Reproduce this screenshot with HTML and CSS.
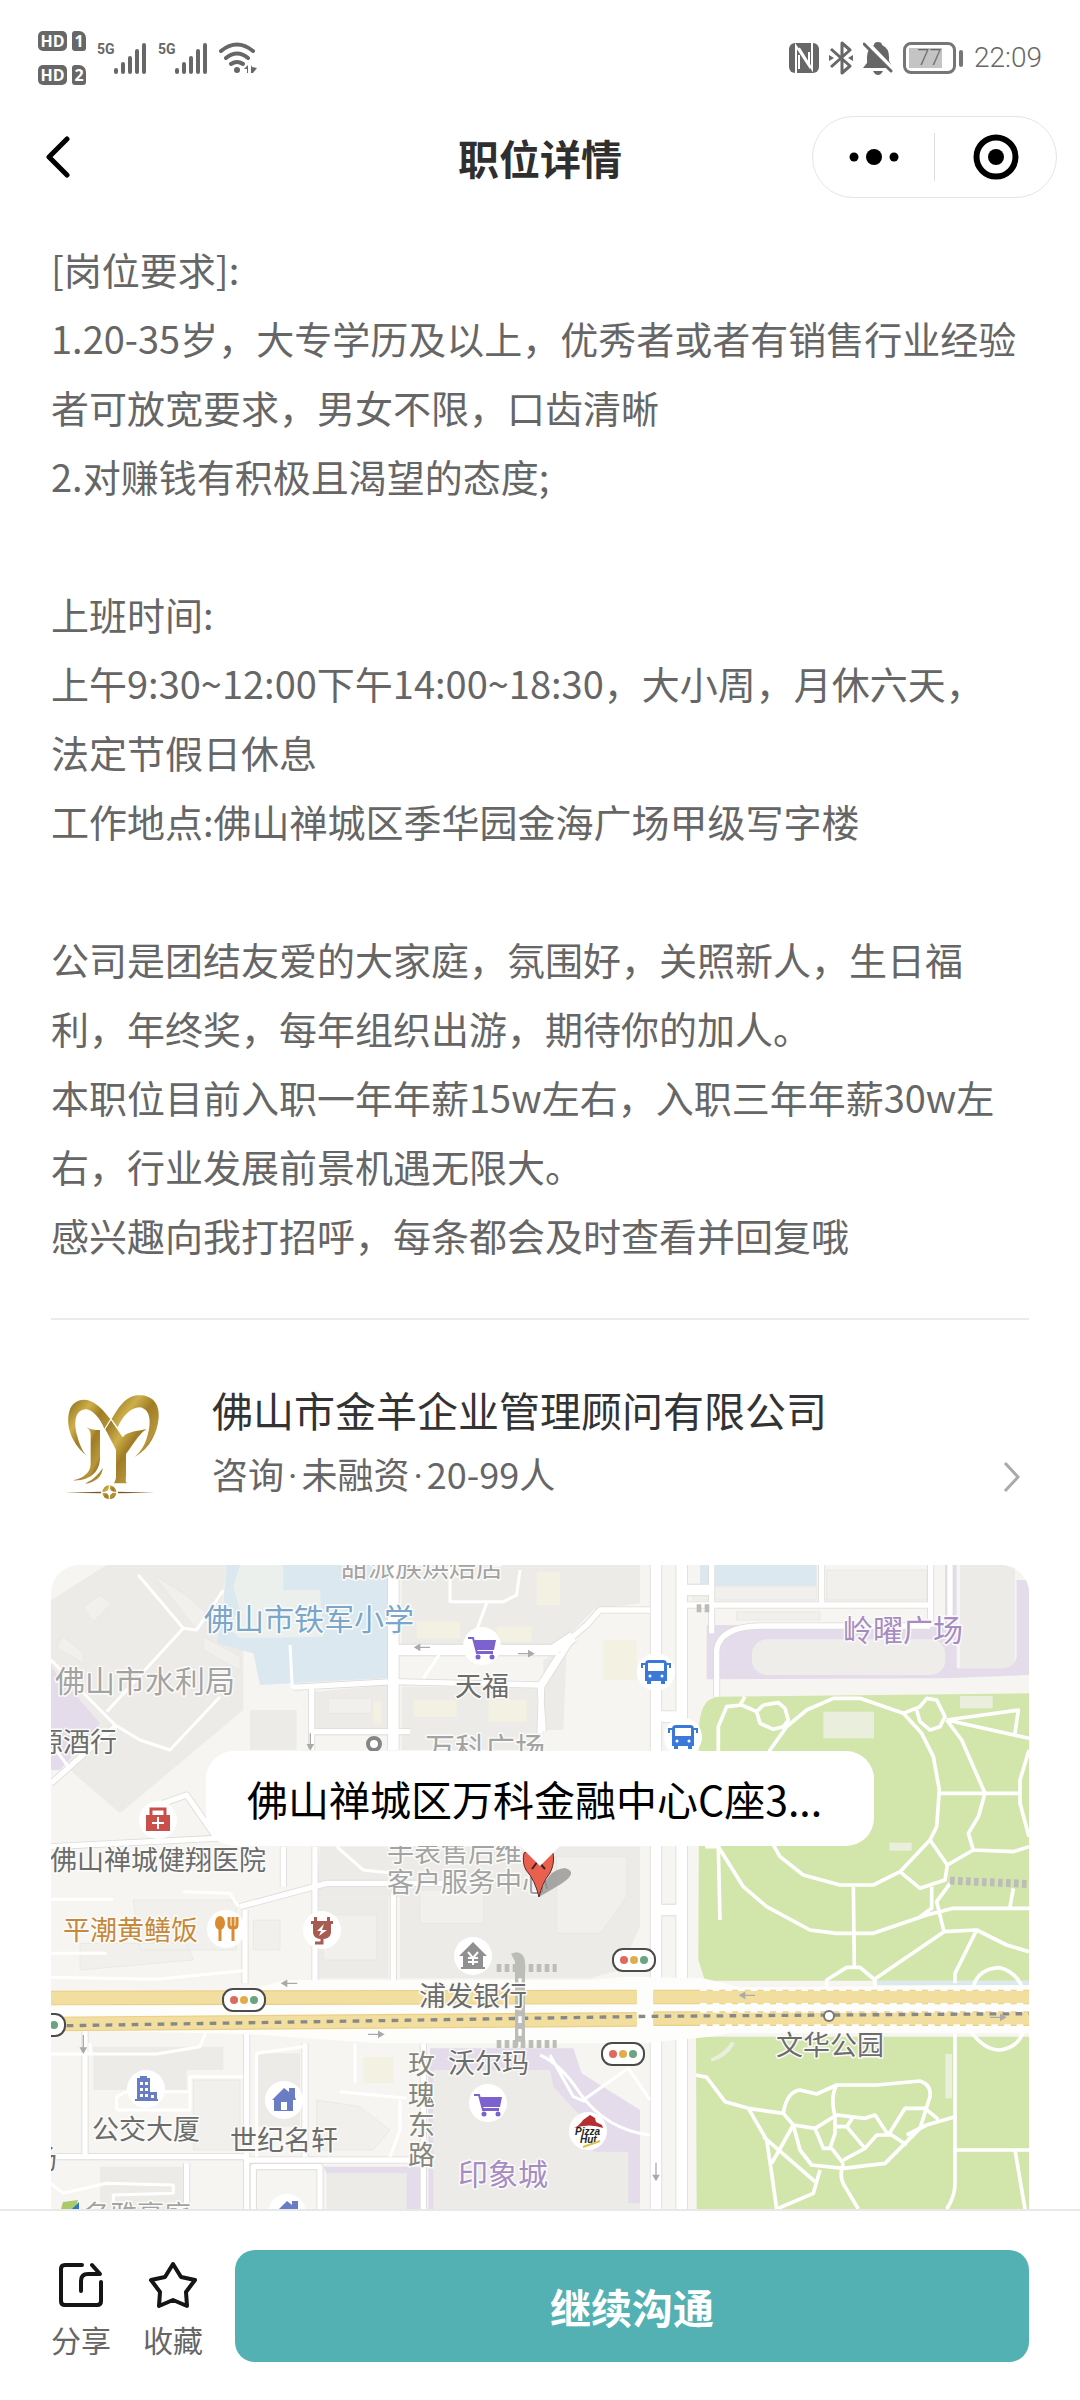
FILE: index.html
```html
<!DOCTYPE html>
<html lang="zh-CN">

<head>
    <meta charset="UTF-8">
    <meta name="viewport" content="width=device-width, initial-scale=1.0">
    <link rel="stylesheet" href="styles.css">

    <title>职位详情</title>
</head>

<body>
<div class="page">
    <!-- 状态栏 -->
    <div class="status">
        <div class="status-left">
            <div class="sims">
                <div class="sim"><span class="hd">HD</span><span class="card">1</span></div>
                <div class="sim"><span class="hd">HD</span><span class="card">2</span></div>
            </div>
            <div class="signal">
                <span>5G</span>
                <svg width="33" height="32" viewBox="0 0 33 32">
                    <path d="M2 28v2M9 22v8M16 16v14M23 9v21M30 3v27"/>
                </svg>
            </div>
            <div class="signal">
                <span>5G</span>
                <svg width="33" height="32" viewBox="0 0 33 32">
                    <path d="M2 28v2M9 22v8M16 16v14M23 9v21M30 3v27"/>
                </svg>
            </div>
            <svg class="wifi" width="38" height="32" viewBox="0 0 38 32">
                <path d="M2 9Q18-4 34 9M7 16Q18 7 29 16M12 22Q18 18 24 22"/>
                <circle cx="18" cy="28" r="3"/>
                <path class="solid" d="M29 23v8h-1v-4h-3zM32 31v-8l1 2 5 1-4 5z"/>
            </svg>
        </div>
        <div class="status-right">
            <svg width="30" height="32" viewBox="0 0 30 32">
                <rect x="0" y="1" width="30" height="30" rx="6" fill="#676767"/>
                <path d="M7 31V4l13 20V10M10 13v14M23 1v26L10 6" fill="none" stroke="#fff" stroke-width="2"/>
            </svg>
            <svg width="24" height="34" viewBox="0 0 24 34">
                <path d="M2 8l19 17-8 7V2l8 7L2 26" fill="none" stroke="#676767" stroke-width="3" stroke-linejoin="round"/>
                <path d="M0 14l5 3-5 3zM24 14l-5 3 5 3z" fill="#676767"/>
            </svg>
            <svg width="30" height="34" viewBox="0 0 30 34">
                <path d="M11 4q0-3 4-3t4 3q7 3 7 12v4l4 7H0l4-5v-6q0-8 7-12zM10 30h10q-2 4-5 4t-5-4z" fill="#676767"/>
                <path d="M3 1l27 28" stroke="#fff" stroke-width="5"/>
                <path d="M1 3l27 27" stroke="#676767" stroke-width="3" stroke-linecap="round"/>
            </svg>
            <div class="battery"><span>77</span></div>
            <span class="clock">22:09</span>
        </div>
    </div>

    <!-- 标题栏 -->
    <header class="nav">
        <button class="back" aria-label="返回">
            <svg width="26" height="42" viewBox="0 0 26 42"><path d="M22 3L4 21l18 18"/></svg>
        </button>
        <h1>职位详情</h1>
        <div class="capsule">
            <button aria-label="更多">
                <svg width="50" height="20" viewBox="0 0 50 20">
                    <circle cx="5" cy="10" r="4.5"/><circle cx="25" cy="10" r="8"/><circle cx="45" cy="10" r="4.5"/>
                </svg>
            </button>
            <button aria-label="关闭">
                <svg width="46" height="46" viewBox="0 0 46 46">
                    <circle cx="23" cy="23" r="19.5" fill="none" stroke="#000" stroke-width="6"/><circle cx="23" cy="23" r="8"/>
                </svg>
            </button>
        </div>
    </header>

    <main>
        <section class="desc">
            <p>[岗位要求]:</p>
            <p>1.20-35岁，大专学历及以上，优秀者或者有销售行业经验者可放宽要求，男女不限，口齿清晰</p>
            <p>2.对赚钱有积极且渴望的态度;</p>
            <br>
            <p>上班时间:</p>
            <p>上午9:30~12:00下午14:00~18:30，大小周，月休六天，<br>法定节假日休息</p>
            <p>工作地点:佛山禅城区季华园金海广场甲级写字楼</p>
            <br>
            <p>公司是团结友爱的大家庭，氛围好，关照新人，生日福利，年终奖，每年组织出游，期待你的加人。</p>
            <p>本职位目前入职一年年薪15w左右，入职三年年薪30w左右，行业发展前景机遇无限大。</p>
            <p>感兴趣向我打招呼，每条都会及时查看并回复哦</p>
        </section>

        <a class="company" href="#">
            <svg class="logo" width="128" height="130" viewBox="33 30 384 390">
                <defs>
                    <linearGradient id="gold" x1="0" y1="0" x2="1" y2="1">
                        <stop offset="0" stop-color="#8a6a1c"/>
                        <stop offset=".3" stop-color="#cdb04a"/>
                        <stop offset=".5" stop-color="#a07c26"/>
                        <stop offset=".75" stop-color="#b8973a"/>
                        <stop offset="1" stop-color="#5f3d12"/>
                    </linearGradient>
                </defs>
                <g fill="url(#gold)">
                    <path d="M138 262C100 230 75 180 88 130 98 92 140 85 170 110 190 125 200 140 211 153L193 182C180 150 160 128 140 124 105 122 100 165 112 205 118 230 128 248 138 262Z"/>
                    <path d="M285 267C330 240 352 195 356 150 360 100 330 78 290 82 250 88 230 130 215 153L233 178C245 150 270 118 300 118 335 125 333 170 322 205 314 235 300 252 285 267Z"/>
                    <path d="M138 176C150 185 165 186 180 186V270C180 310 150 340 98 337 130 330 150 315 152 290V200C152 188 145 182 138 176Z"/>
                    <path d="M188 300C188 325 165 345 135 347 160 335 175 320 188 300Z"/>
                    <path d="M196 184L213 157 248 208C262 190 290 190 320 183 300 195 290 215 258 258V320C258 335 255 342 262 346H222C228 335 228 330 228 315V245Z"/>
                    <circle cx="208" cy="373" r="21"/>
                </g>
                <path d="M75 374L183 371V376ZM345 374L234 371V376Z" fill="#7a5a1c"/>
                <path d="M208 350V396M185 373H231" stroke="#fff" stroke-width="3"/>
                <path d="M208 357Q211 370 224 373 211 376 208 389 205 376 192 373 205 370 208 357Z" fill="#fff"/>
            </svg>
            <span class="company-text">
                <strong>佛山市金羊企业管理顾问有限公司</strong>
                <span>咨询<i>·</i>未融资<i>·</i>20-99人</span>
            </span>
            <svg class="arrow" width="20" height="32" viewBox="0 0 20 32"><path d="M3 2l13 14L3 30"/></svg>
        </a>

        <div class="map">
            <!-- 底图 -->
            <svg class="map-base" viewBox="33 45 2934 1932" preserveAspectRatio="xMidYMin slice">
                <defs>
                    <g id="minor">
                        <path d="M295 75L430 235 470 240 550 120M430 235L200 485M33 330L225 525 300 570 390 600 540 440M40 590L85 650M750 285L757 415M1200 310L1150 385M1230 45V155H1390L1430 135 1440 60M1340 160L1310 240M890 890L970 960 1060 970"/>
                        <path d="M33 1048H220M33 1210H200M430 1025L570 1030 595 1070M33 1282L350 1288 610 1262M33 1512H350L480 1490 500 1440M150 1512V1480M230 1680V1640L260 1625H450M230 1680H450V1580H610M650 1820V1510L790 1490M945 1480V1600M900 1625L1100 1645M1080 1650V1740L1050 1820M33 1900L70 1930 200 1900 400 1905V1930L220 1935V1977"/>
                        <path d="M1530 1515L1600 1640 1635 1655M1500 1515Q1560 1540 1620 1630 1700 1740 1830 1755M1630 1650L1765 1555 1830 1650"/>
                    </g>
                    <g id="mid">
                        <path d="M33 700L230 525M33 890L530 865 440 735 370 760M760 412L1060 395 1500 405M815 415V600M815 545H1110M1560 310L1500 405 1510 545M730 890V1010M825 890V1300M600 1070L860 1000 1300 1000M615 1080V1300M1060 1030V1300M135 1440V1820M33 1820H620M620 1830H1160M620 1440V1977M795 1480V1820M1150 1480V1977M440 1840V1977M640 1977V1850H840V1977M1930 165H2680M2015 45V250M2345 45V165M2672 45V230M2730 45V240M2030 440V300Q2040 230 2160 228H2670M1575 280L1640 225 1680 180H1830M1500 550L1505 410 1600 260"/>
                    </g>
                    <g id="main">
                        <path d="M1060 45V600M1060 300H1540L1600 260M1848 45V1977M1925 45V1977M1848 1080H1930M1850 500H1925M1940 120H2010"/>
                    </g>
                </defs>

                <rect x="33" y="45" width="2934" height="1932" fill="#f6f5f1"/>

                <!-- 街区 -->
                <g fill="#ecebe8">
                    <path d="M33 150L200 45H560L530 280 610 300V480L240 790 90 660 33 600Z"/>
                    <path d="M1085 45H1800V160L1660 180 1560 285H1085ZM825 425L1045 405V535H825ZM1085 410H1490L1500 600H1085ZM1510 330L1580 290 1570 540 1510 540ZM840 890H1800V1130L1740 1260 1650 1285H1080V1040L830 1040Z"/>
                    <path d="M835 1040H1045V1285H835ZM630 480H770V600H630ZM160 1490H550V1560H160ZM160 1560H440V1620H160ZM1180 1540H1540L1800 1760V1977H1180ZM860 1870H1100V1977H860ZM180 1850H430V1977H180ZM650 1510H780V1730H650Z"/>
                    <path d="M2760 45H2925V320Q2925 355 2890 355H2760Z"/>
                </g>
                <g fill="#f1f0ec" stroke="#e6e5e1" stroke-width="2">
                    <path d="M340 75L430 130 500 190 470 240 400 150ZM130 170L180 135 215 160 160 215ZM70 260L130 310V340L50 290ZM490 260L600 320V360L490 300Z"/>
                    <path d="M865 445H995V490H865ZM850 1095H1010V1230H850ZM1140 1020H1330V1120H1140ZM1550 920H1760V1040L1680 1150H1550ZM460 1590H600V1800H460ZM830 1650L960 1670 1050 1740 1000 1800H830ZM1960 110H2330V150H1960ZM2360 60H2660V150H2360ZM2090 185H2340V210H2090Z"/>
                    <path d="M120 1260V1180H440L460 1230ZM280 1050H590V1200H300ZM640 1110H720V1200H640Z"/>
                </g>
                <g fill="#f3f1e2">
                    <path d="M1130 215H1260V265H1130ZM1370 230H1475V275H1370ZM1120 450H1250V500H1120ZM1345 450H1460V515H1345ZM1490 65H1560V165H1490ZM1000 455H1025V520H1000ZM1690 270H1790V390H1690ZM970 1520H1060V1600H970Z"/>
                </g>

                <!-- 学校、水面 -->
                <g fill="#dce8ef">
                    <path d="M560 45H1045V385L830 395 660 405 640 310 530 280 550 150Z"/>
                    <path d="M1980 45H2330V108H1980ZM2500 1292H2967V1305H2500Z"/>
                </g>
                <path d="M600 45H730V120H840L850 260 600 265 560 230 600 180 580 110Z" fill="#ebf0ed"/>

                <!-- 商场 -->
                <g fill="#e4dcea">
                    <path d="M33 350L180 520 60 660 33 660Z"/>
                    <path d="M2000 225H2715V45H2750V355H2890Q2925 350 2930 320V90H2967V375L2715 385 2000 388Z"/>
                    <path d="M1170 1495H1600L1625 1570 1800 1680V1960H1765V1805H1660V1740L1540 1610 1530 1560H1170ZM850 1850H1160V1977H1100V1870H860ZM1165 1540H1180V1977H1165Z"/>
                </g>
                <rect x="2136" y="268" width="580" height="107" rx="45" fill="#eeedea"/>

                <!-- 公园 -->
                <g fill="#d2e6ab">
                    <path d="M1978 520Q1985 440 2040 440L2967 430V1292H1995L1975 1230Z"/>
                    <path d="M1968 1460H2967V1977H1970Z"/>
                </g>
                <g fill="#e9eedd">
                    <path d="M2350 485H2502V565H2350ZM2548 878H2615V902H2548ZM2760 438H2858V475H2760ZM2716 1512H2736V1645H2716ZM2012 1525Q2050 1510 2075 1475L2085 1480Q2060 1525 2015 1535Z"/>
                </g>

                <!-- 道路 -->
                <g fill="none" stroke-linejoin="round">
                    <g stroke="#dddcd9">
                        <use href="#mid" stroke-width="21"/>
                        <use href="#main" stroke-width="37"/>
                    </g>
                    <g stroke="#fff">
                        <use href="#minor" stroke-width="9"/>
                        <use href="#mid" stroke-width="16"/>
                        <use href="#main" stroke-width="32"/>
                    </g>
                </g>

                <!-- 公园小路 -->
                <g class="trail">
                    <path d="M2040 1110L2035 895V530L2060 470 2105 465 2150 485M2115 440L2100 465M2170 465L2215 458 2235 475 2245 510 2230 530 2200 538 2160 520 2150 485 2170 465M2240 530L2300 480 2380 445H2460L2590 490 2645 550 2680 620 2698 720 2690 830 2670 870 2580 965 2500 1005H2400L2290 975 2220 920 2180 850 2170 700 2190 600 2240 530"/>
                    <path d="M2590 490L2640 470 2660 445 2690 450 2715 500 2700 530 2670 540 2640 515 2630 480M2720 510L2935 480 2925 550M2720 510L2967 565M2720 510L2765 570 2835 730 2815 800 2785 850 2800 900 2920 905 2967 890M2700 730H2940M2967 600L2940 690V760L2967 860M2670 870L2722 945 2800 900M2722 945L2715 990 2640 1015 2580 965"/>
                    <path d="M1995 890H2035L2110 1010 2180 1070 2310 1140 2390 1150H2500L2660 1095 2740 1075H2967M2440 1010L2443 1250M2675 1010V1075L2640 1100M2730 1000L2690 1055 2712 1145M2712 1145L2500 1290M2712 1145L2810 1140 2900 1185 2967 1205M2810 1140L2745 1270V1300M2910 1070L2920 1015M2360 1310V1290L2420 1252H2460L2505 1290V1320M2800 1310Q2815 1255 2880 1253 2930 1265 2950 1320M2790 1440Q2830 1500 2880 1500 2940 1490 2950 1440"/>
                    <path d="M1968 1575L2000 1582 2055 1655 2125 1675 2230 1690 2260 1725 2325 1735 2390 1695 2475 1705 2505 1695 2545 1755 2595 1675H2655L2695 1708M2230 1690Q2240 1625 2280 1620L2330 1632 2390 1605H2510L2640 1593Q2675 1605 2670 1640L2640 1735 2535 1840 2410 1855 2315 1845 2280 1800 2260 1725 2195 1840M2125 1675L2180 1770 2195 1870 2210 1977 2320 1930 2340 1860M2170 1760L2325 1895M2390 1605Q2370 1640 2385 1700V1750L2370 1795H2350L2325 1735M2385 1730H2420L2440 1700M2420 1730L2475 1795M2375 1795L2410 1840M2410 1830L2475 1795 2510 1755H2555L2600 1785M2600 1755L2660 1725 2745 1700M2410 1840Q2395 1880 2415 1910L2455 1977M2745 1450V1900Q2745 1940 2720 1977M2750 1800H2967M2925 1800L2955 1977"/>
                </g>

                <!-- 主干道 -->
                <path d="M33 1325H600L740 1290H1640L1770 1280 1990 1285 2100 1312 2967 1305V1450H2070L2010 1460 1810 1480H1010L620 1452 33 1440Z" fill="#fdfdfb"/>
                <g fill="none">
                    <path d="M33 1344L1790 1341M1840 1341H2967" stroke="#ebcf87" stroke-width="44"/>
                    <path d="M33 1344L1790 1341M1840 1341H2967" stroke="#f2dfa0" stroke-width="37"/>
                    <path d="M33 1422L1790 1408M1840 1406H2967" stroke="#ebcf87" stroke-width="44"/>
                    <path d="M33 1422L1790 1408M1840 1406H2967" stroke="#f2dfa0" stroke-width="37"/>
                    <path d="M1980 1320H2967M1980 1362H2967M1980 1385H2967M1980 1426H2967" stroke="#fdfdfb" stroke-width="6" stroke-dasharray="20 18"/>
                    <path d="M80 1427L1830 1399 2967 1391" stroke="#888" stroke-width="10" stroke-dasharray="20 19"/>
                    <path d="M1420 1225Q1440 1215 1440 1240V1490" stroke="#bdbdb7" stroke-width="30"/>
                    <path d="M1440 1285V1490" stroke="#fff" stroke-width="10" stroke-dasharray="20 18"/>
                    <path d="M1370 1254H1550M1370 1482H1550M2730 992L2967 1002M1970 175H2010" stroke="#bdbdb7" stroke-width="24" stroke-dasharray="14 10"/>
                </g>

                <!-- 行车方向 -->
                <g class="way">
                    <path d="M1170 292H1130M1125 292l14-8v16zM1434 311H1475M1480 311l-14-8v16zM811 550V590M811 598l-8-14h16z"/>
                    <path d="M772 1300H732M726 1300l14-8v16zM984 1453H1024M1030 1453l-14-8v16zM130 1455V1500M130 1508l-8-14h16zM2145 1336H2105M2100 1336l14-8v16zM2850 1402H2890M2896 1402l-14-8v16zM1848 1838V1880M1848 1890l-8-14h16z"/>
                </g>
            </svg>

            <!-- 地名 -->
            <svg class="map-labels" viewBox="0 0 978 644" preserveAspectRatio="xMidYMin slice">
                <defs>
                    <g id="lamp">
                        <rect x="-21" y="-11" width="42" height="22" rx="10" fill="#fff" stroke="#4b4b4b" stroke-width="2"/>
                        <circle cx="-10" r="4" fill="#e0695f"/><circle r="4" fill="#e0ad4b"/><circle cx="10" r="4" fill="#6aa581"/>
                    </g>
                    <g id="cart" fill="#7b62cf">
                        <circle r="19" fill="#fff"/>
                        <path d="M-8-6H14L12 4H-6ZM-6 5H11V8H-6Z"/>
                        <path d="M-14-8H-9L-5 7" fill="none" stroke="#7b62cf" stroke-width="2"/>
                        <circle cx="-4" cy="11" r="2.5"/><circle cx="10" cy="11" r="2.5"/>
                    </g>
                    <g id="bus" fill="#3b79d8">
                        <circle r="19" fill="#fff"/>
                        <path d="M-11-8Q-11-12-7-12H7Q11-12 11-8V9H9V12H5V9H-5V12H-9V9H-11Z"/>
                        <path d="M-8-9H8V-1H-8Z" fill="#fff"/>
                        <path d="M-11-8H-14V-4M11-8H14V-4" fill="none" stroke="#3b79d8" stroke-width="2"/>
                        <circle cx="-6" cy="4" r="1.5" fill="#fff"/><circle cx="6" cy="4" r="1.5" fill="#fff"/>
                    </g>
                    <g id="house">
                        <circle r="19" fill="#fff"/>
                        <path d="M0-12L5-8V-12H11V-3L12 0H9V11H-10V0H-12ZM-3 10H3V2H-3Z" fill="#6a7cc4" fill-rule="evenodd"/>
                    </g>
                </defs>

                <g class="s">
                    <text x="290" y="12" class="gray">甜派族烘焙店</text>
                    <text x="404" y="131">天福</text>
                    <text x="-15" y="187">源酒行</text>
                    <text x="-1" y="305">佛山禅城健翔医院</text>
                    <text x="336" y="297" class="gray">手表售后维</text>
                    <text x="336" y="327" class="gray">客户服务中心</text>
                    <text x="12" y="375" class="orange">平潮黄鳝饭</text>
                    <text x="368" y="441">浦发银行</text>
                    <text x="397" y="508">沃尔玛</text>
                    <text x="41" y="574">公交大厦</text>
                    <text x="179" y="585">世纪名轩</text>
                    <text x="725" y="490">文华公园</text>
                    <text x="-21" y="604">场</text>
                    <text x="32" y="660" class="gray">名雅豪庭</text>
                    <text class="road"><tspan x="357" y="509">玫</tspan><tspan x="357" y="540">瑰</tspan><tspan x="357" y="570">东</tspan><tspan x="357" y="600">路</tspan></text>
                </g>
                <g class="m">
                    <text x="153" y="65" class="blue">佛山市铁军小学</text>
                    <text x="4" y="127" class="gray">佛山市水利局</text>
                    <text x="374" y="194" class="gray">万科广场</text>
                    <text x="792" y="76" class="purple">岭曜广场</text>
                    <text x="407" y="620" class="purple">印象城</text>
                </g>

                <use href="#cart" x="431" y="81"/>
                <use href="#cart" x="437" y="538"/>
                <use href="#bus" x="605" y="107"/>
                <use href="#bus" x="632" y="172"/>
                <use href="#house" x="233" y="535"/>
                <use href="#house" x="236" y="648"/>
                <use href="#lamp" x="193" y="435"/>
                <use href="#lamp" x="-7" y="460"/>
                <use href="#lamp" x="583" y="395"/>
                <use href="#lamp" x="572" y="489"/>
                <circle cx="323" cy="179" r="6" fill="#fff" stroke="#858585" stroke-width="4"/>
                <circle cx="778" cy="451" r="5" fill="#fff" stroke="#777" stroke-width="2"/>

                <!-- 医院 -->
                <g transform="translate(107 255)">
                    <circle r="19" fill="#fff"/>
                    <path d="M-12-5H12V11H-12Z" fill="#c94f4b"/>
                    <path d="M-7-5V-11H7V-5" fill="none" stroke="#c94f4b" stroke-width="3"/>
                    <path d="M-6 3H6M0-3V9" stroke="#fff" stroke-width="2"/>
                </g>
                <!-- 餐厅 -->
                <g transform="translate(175 364)">
                    <circle r="19" fill="#fff"/>
                    <ellipse cx="-6" cy="-6" rx="5" ry="7" fill="#d88b30"/>
                    <path d="M-6 0V12M7-2V12M3-12V-4Q3-1 7-1T11-4V-12M7-12V-2" fill="none" stroke="#d88b30" stroke-width="3"/>
                </g>
                <!-- 充电站 -->
                <g transform="translate(271 365)">
                    <circle r="19" fill="#fff"/>
                    <path d="M-11-9H11V-6H9V3Q8 9 0 9T-9 3V-6H-11ZM-8-13H-5V-8H-8ZM5-13H8V-8H5Z" fill="#a85b50"/>
                    <path d="M0 8V13H-7" fill="none" stroke="#a85b50" stroke-width="3"/>
                    <path d="M2-6L-5 1H-1L-3 6 5 0H0Z" fill="#fff"/>
                </g>
                <!-- 银行 -->
                <g transform="translate(422 391)">
                    <circle r="19" fill="#fff"/>
                    <path d="M0-14L14 0H10V11H12V13H-12V11H-10V0H-14Z" fill="#909090"/>
                    <path d="M-5-4L0 2 5-4M0 2V9M-5 2H5M-5 6H5" fill="none" stroke="#fff" stroke-width="2"/>
                </g>
                <!-- 写字楼 -->
                <g transform="translate(95 524)">
                    <circle r="19" fill="#fff"/>
                    <path d="M-9-11H-6V-13H1V-11H4V3H11V10H12V12H-11V10H-9Z" fill="#6a7cc4"/>
                    <path d="M-6-7H-3V-4H-6ZM-1-7H2V-4H-1ZM-6-1H-3V2H-6ZM-1-1H2V2H-1ZM-6 5H-3V8H-6ZM-1 5H2V8H-1ZM5 6H8V9H5Z" fill="#fff"/>
                </g>
                <!-- 必胜客 -->
                <g transform="translate(537 566)">
                    <circle r="19" fill="#fff"/>
                    <path d="M-14-3Q-8-6-5-11L2-16 7-13 8-9 14-6 15-3Q2-8-14-3Z" fill="#b52f31"/>
                    <text class="hut" x="-13" y="4">Pizza</text>
                    <text class="hut" x="-8" y="12">Hut</text>
                    <path d="M-5 16L12 10" stroke="#e5bf48" stroke-width="2"/>
                </g>
                <path d="M12 637L27 635 24 644H10Z" fill="#a9c96a"/>
                <path d="M21 644L28 637V644Z" fill="#2f78c4"/>

                <!-- 标记 -->
                <path d="M488 332Q496 304 514 303 528 307 510 319 500 325 488 332Z" fill="#888" opacity=".7"/>
                <path d="M488 332Q484 315 475 305 471 298 473 288 487 278 502 288 504 298 499 308 491 318 488 332Z" fill="#e9604f" stroke="#5a2a24"/>
                <path d="M481 304L487 296 494 304" fill="none" stroke="#3b2320" stroke-width="2"/>
            </svg>
            <div class="bubble">佛山禅城区万科金融中心C座3...</div>
        </div>
    </main>

    <!-- 底部操作栏 -->
    <footer class="bar">
        <button class="tool">
            <svg width="46" height="48" viewBox="0 0 46 48">
                <path d="M24 4H7Q3 4 3 8V40Q3 44 7 44H39Q43 44 43 40V21M23 30V20Q23 13 30 13H42L34 4"/>
            </svg>
            分享
        </button>
        <button class="tool">
            <svg width="50" height="48" viewBox="0 0 50 48">
                <path d="M25 3L33 16 47 19 38 31 39 45 25 39 11 45 12 31 3 19 17 16Z"/>
            </svg>
            收藏
        </button>
        <button class="chat">继续沟通</button>
    </footer>
</div>
</body>

</html>
```
FILE: styles.css
```css
* {
    margin: 0;
    padding: 0;
    box-sizing: border-box;
}

body {
    background: #fff;
    color: #666;
    font-family: "Noto Sans CJK SC", sans-serif;
}

button {
    border: 0;
    background: none;
    color: inherit;
    font-family: inherit;
    cursor: pointer;
}

svg {
    display: block;
}

.page {
    min-height: 100vh;
    display: flex;
    flex-direction: column;
}

/* 状态栏 */
.status {
    height: 116px;
    padding: 0 38px;
    display: flex;
    justify-content: space-between;
    align-items: center;
    color: #676767;
}

.status-left,
.status-right {
    display: flex;
    align-items: center;
}

.status-left {
    gap: 11px;
}

.status-right {
    gap: 10px;
}

.sims {
    display: grid;
    gap: 14px;
}

.sim {
    display: flex;
    gap: 5px;
}

.hd,
.card {
    height: 20px;
    border-radius: 5px;
    background: #676767;
    color: #fff;
    font: bold 16px/20px "Open Sans", sans-serif;
    text-align: center;
}

.hd {
    width: 29px;
}

.card {
    width: 14px;
    border-radius: 3px 7px 3px 3px;
}

.signal {
    display: flex;
}

.signal span {
    width: 17px;
    font: bold 14px/14px Roboto, sans-serif;
}

.signal path,
.wifi path {
    fill: none;
    stroke: #676767;
    stroke-width: 4;
    stroke-linecap: round;
}

.wifi circle,
.wifi .solid {
    fill: #676767;
    stroke: none;
}

.battery {
    position: relative;
    width: 53px;
    height: 32px;
    margin-right: 8px;
    padding: 4px;
    border: 3px solid #767676;
    border-radius: 8px;
    background: linear-gradient(#c4c4c4, #c4c4c4) 3px 3px / 33px 20px no-repeat;
    font: 300 22px/18px Roboto, sans-serif;
    text-align: center;
}

.battery::after {
    content: "";
    position: absolute;
    top: 5px;
    right: -10px;
    width: 4px;
    height: 17px;
    border-radius: 2px;
    background: #767676;
}

.clock {
    font: 300 28px/32px Roboto, sans-serif;
}

/* 标题栏 */
.nav {
    height: 82px;
    padding: 0 23px 0 45px;
    display: grid;
    grid-template-columns: 1fr auto 1fr;
    align-items: center;
}

.back {
    justify-self: start;
}

.back path {
    fill: none;
    stroke: #000;
    stroke-width: 5;
    stroke-linecap: round;
    stroke-linejoin: round;
}

.nav h1 {
    padding-right: 22px;
    color: #2f2f2f;
    font-size: 41px;
    line-height: 60px;
}

.capsule {
    justify-self: end;
    width: 245px;
    height: 82px;
    display: flex;
    align-items: center;
    border: 1px solid #e5e5e5;
    border-radius: 41px;
}

.capsule button {
    flex: 1;
    height: 48px;
    display: flex;
    align-items: center;
    justify-content: center;
}

.capsule button + button {
    border-left: 1px solid #dcdcdc;
}

/* 正文 */
main {
    padding: 36px 51px 0;
}

.desc {
    padding-bottom: 49px;
    border-bottom: 2px solid #ebebeb;
    font-size: 38px;
    line-height: 69px;
}

.company {
    height: 245px;
    display: flex;
    align-items: center;
    gap: 33px;
    color: #666;
    text-decoration: none;
}

.company-text {
    flex: 1;
    display: grid;
    gap: 4px;
    font-size: 36px;
    line-height: 60px;
}

.company strong {
    color: #333;
    font-size: 41px;
    font-weight: normal;
}

.company i {
    padding: 0 4px;
    font-family: Roboto, sans-serif;
    font-style: normal;
}

.arrow {
    margin: 68px 7px 0 0;
}

.arrow path {
    fill: none;
    stroke: #aaa;
    stroke-width: 3;
}

/* 地图 */
.map {
    position: relative;
    border-radius: 28px 28px 0 0;
    overflow: hidden;
}

.map-base {
    width: 100%;
}

.map-labels {
    position: absolute;
    top: 0;
    left: 0;
    width: 100%;
    height: 100%;
}

.map-labels text {
    fill: #6c6c6c;
    stroke: #fbfbf9;
    stroke-width: 3;
    stroke-linejoin: round;
    paint-order: stroke;
}

.s {
    font-size: 27px;
}

.m {
    font-size: 30px;
}

.map-labels .gray {
    fill: #a3a3a3;
}

.map-labels .road {
    fill: #85857c;
}

.map-labels .blue {
    fill: #79a6ca;
}

.map-labels .purple {
    fill: #a78bc2;
}

.map-labels .orange {
    fill: #c5893b;
}

.map-labels .hut {
    fill: #222;
    stroke: none;
    font: italic bold 10px "Liberation Sans", sans-serif;
}

.trail {
    fill: none;
    stroke: #fff;
    stroke-width: 11;
    stroke-linejoin: round;
}

.way {
    fill: #aaa;
    stroke: #aaa;
    stroke-width: 4;
}

.bubble {
    position: absolute;
    top: 186px;
    left: 50%;
    width: 668px;
    padding: 17px 41px 18px;
    border-radius: 28px;
    background: #fff;
    color: #000;
    font-size: 41px;
    line-height: 60px;
    white-space: nowrap;
    transform: translateX(-50%);
}

.bubble::after {
    content: "";
    position: absolute;
    top: 100%;
    left: 50%;
    margin-left: -20px;
    border: 20px solid transparent;
    border-top-color: #fff;
    border-bottom: 0;
}

/* 底部操作栏 */
.bar {
    position: sticky;
    bottom: 0;
    height: 191px;
    padding: 39px 51px 38px;
    display: flex;
    align-items: center;
    gap: 32px;
    border-top: 2px solid #e8e8e8;
    background: #fff;
}

.tool {
    width: 60px;
    padding-top: 10px;
    display: grid;
    justify-items: center;
    gap: 8px;
    color: #666;
    font-size: 30px;
    line-height: 44px;
    white-space: nowrap;
}

.tool path {
    fill: none;
    stroke: #151515;
    stroke-width: 4;
    stroke-linecap: round;
    stroke-linejoin: round;
}

.chat {
    flex: 1;
    height: 112px;
    border-radius: 20px;
    background: #53b0b3;
    color: #fff;
    font-size: 41px;
    font-weight: bold;
}
```
